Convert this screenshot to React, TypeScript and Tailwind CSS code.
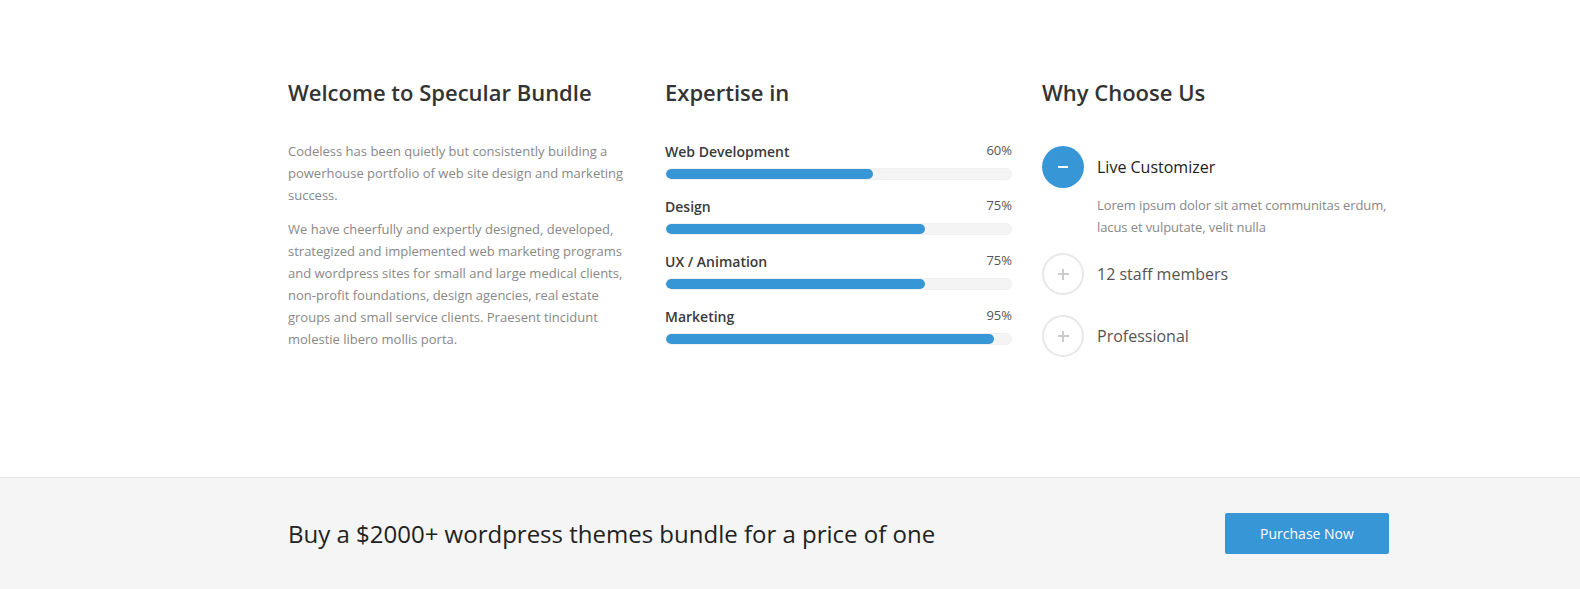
import React from 'react';

const skills = [
  { label: 'Web Development', value: 60 },
  { label: 'Design', value: 75 },
  { label: 'UX / Animation', value: 75 },
  { label: 'Marketing', value: 95 },
];

const reasons = [
  {
    title: 'Live Customizer',
    open: true,
    text: 'Lorem ipsum dolor sit amet communitas erdum, lacus et vulputate, velit nulla',
  },
  { title: '12 staff members', open: false, text: '' },
  { title: 'Professional', open: false, text: '' },
];

const App: React.FC = () => {
  return (
    <div className="min-h-screen bg-white font-['Open_Sans',sans-serif]">
      {/* Three columns */}
      <div className="h-[477px] pt-[77px]">
        <div className="ml-[288px] w-[1101px] grid grid-cols-3 gap-[30px]">
          <div>
            <h3 className="text-[22px] leading-[30px] font-semibold text-[#333]">Welcome to Specular Bundle</h3>
            <div className="mt-[33px] text-[13px] leading-[22px] text-[#888] space-y-[12px] pr-[10px]">
              <p>Codeless has been quietly but consistently building a powerhouse portfolio of web site design and marketing success.</p>
              <p>
                We have cheerfully and expertly designed, developed, strategized and implemented web marketing programs
                and wordpress sites for small and large medical clients, non-profit foundations, design agencies, real
                estate groups and small service clients. Praesent tincidunt molestie libero mollis porta.
              </p>
            </div>
          </div>

          <div>
            <h3 className="text-[22px] leading-[30px] font-semibold text-[#333]">Expertise in</h3>
            <div className="mt-[34px]">
              {skills.map(s => (
                <div key={s.label} className="pb-[16px]">
                  <div className="flex items-center justify-between h-[20px]">
                    <span className="text-[14px] font-semibold text-[#3a3a3a]">{s.label}</span>
                    <span className="text-[13px] text-[#555]">{s.value}%</span>
                  </div>
                  <div className="mt-[7px] h-[12px] rounded-full bg-[#f4f4f4] border border-[#efefef] overflow-hidden">
                    <div className="h-full rounded-full bg-[#3796d6]" style={{ width: `${s.value}%` }} />
                  </div>
                </div>
              ))}
            </div>
          </div>

          <div>
            <h3 className="text-[22px] leading-[30px] font-semibold text-[#333]">Why Choose Us</h3>
            <div className="mt-[39px]">
              {reasons.map(r => (
                <div key={r.title} className={r.open ? 'pb-[15px]' : 'pb-[20px]'}>
                  <div className="flex items-center gap-[13px]">
                    {r.open ? (
                      <span className="w-[42px] h-[42px] rounded-full bg-[#3796d6] flex items-center justify-center">
                        <span className="block w-[10px] h-[2px] bg-white" />
                      </span>
                    ) : (
                      <span className="w-[42px] h-[42px] rounded-full border-2 border-[#e8e8e8] flex items-center justify-center relative">
                        <span className="absolute w-[11px] h-[1.5px] bg-[#cccccc]" />
                        <span className="absolute w-[1.5px] h-[11px] bg-[#cccccc]" />
                      </span>
                    )}
                    <span className={`text-[16px] ${r.open ? 'text-[#222]' : 'text-[#555]'}`}>{r.title}</span>
                  </div>
                  {r.open && (
                    <p className="mt-[6px] ml-[55px] mr-[-12px] text-[13px] leading-[22px] text-[#888] tracking-[-0.1px]">{r.text}</p>
                  )}
                </div>
              ))}
            </div>
          </div>
        </div>
      </div>

      {/* Purchase bar */}
      <div className="border-t border-[#e5e5e5] bg-[#f5f5f5] pt-[35px] pb-[40px]">
        <div className="ml-[288px] w-[1101px] flex items-center justify-between">
          <h2 className="text-[24px] text-[#222]">Buy a $2000+ wordpress themes bundle for a price of one</h2>
          <button className="w-[164px] h-[41px] rounded-[2px] bg-[#3796d6] text-white text-[14px]">Purchase Now</button>
        </div>
      </div>
    </div>
  );
};

export default App;
